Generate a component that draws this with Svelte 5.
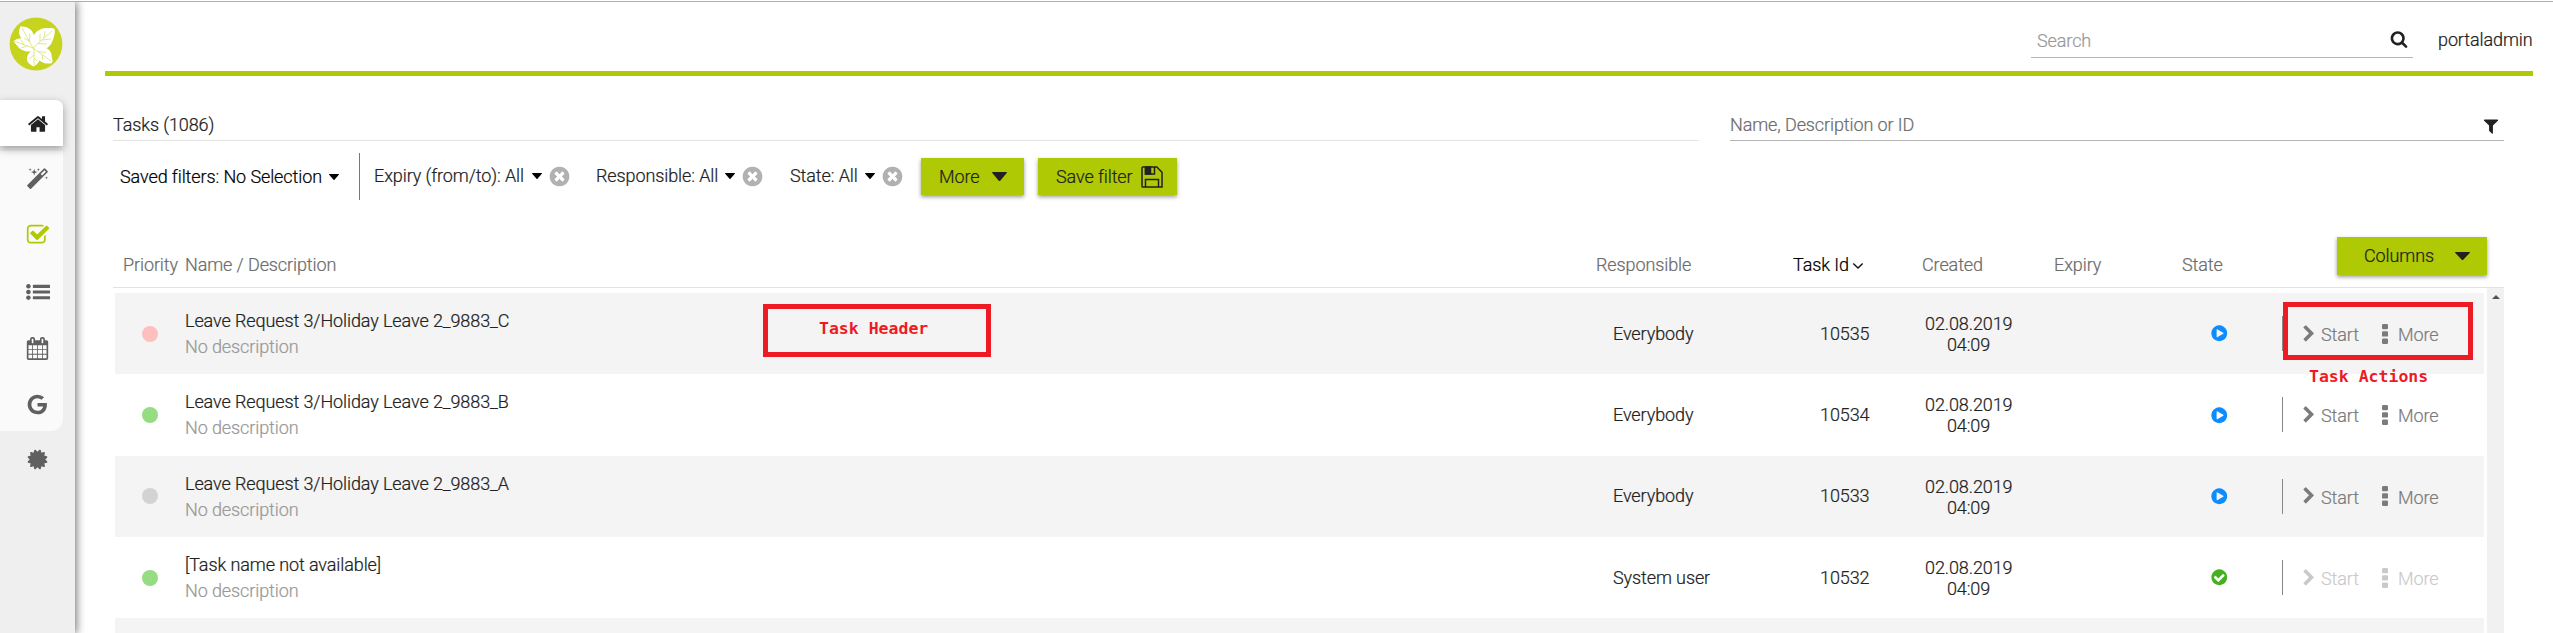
<script>
  const icons = {
    home: 'M1472 992v480q0 26-19 45t-45 19h-384v-384h-256v384h-384q-26 0-45-19t-19-45v-480q0-1 .5-3t.5-3l575-474 575 474q1 2 1 6zm223-69l-62 74q-8 9-21 11h-3q-13 0-21-7l-692-577-692 577q-12 8-24 7-13-2-21-11l-62-74q-8-10-7-23.5t11-21.5l719-599q32-26 76-26t76 26l244 204v-195q0-14 9-23t23-9h192q14 0 23 9t9 23v408l219 182q10 8 11 21.5t-7 23.5z',
    magic: 'M1254 581l293-293-107-107-293 293zm447-293q0 27-18 45l-1286 1286q-18 18-45 18t-45-18l-198-198q-18-18-18-45t18-45l1286-1286q18-18 45-18t45 18l198 198q18 18 18 45zm-1351-190l98 30-98 30-30 98-30-98-98-30 98-30 30-98zm350 162l196 60-196 60-60 196-60-196-196-60 196-60 60-196zm930 478l98 30-98 30-30 98-30-98-98-30 98-30 30-98zm-640-640l98 30-98 30-30 98-30-98-98-30 98-30 30-98z',
    check: 'M1472 930v318q0 119-84.5 203.5t-203.5 84.5h-832q-119 0-203.5-84.5t-84.5-203.5v-832q0-119 84.5-203.5t203.5-84.5h832q63 0 117 25 15 7 18 23 3 17-9 29l-49 49q-10 10-23 10-3 0-9-2-23-6-45-6h-832q-66 0-113 47t-47 113v832q0 66 47 113t113 47h832q66 0 113-47t47-113v-254q0-13 9-22l64-64q10-10 23-10 6 0 12 3 20 8 20 29zm231-489l-814 814q-24 24-57 24t-57-24l-430-430q-24-24-24-57t24-57l110-110q24-24 57-24t57 24l263 263 647-647q24-24 57-24t57 24l110 110q24 24 24 57t-24 57z',
    list: 'M180 300a170 170 0 1 0 .1 0zM180 726a170 170 0 1 0 .1 0zM180 1152a170 170 0 1 0 .1 0zM560 360h1200q50 0 50 50v130q0 50-50 50h-1200q-50 0-50-50v-130q0-50 50-50zM560 786h1200q50 0 50 50v130q0 50-50 50h-1200q-50 0-50-50v-130q0-50 50-50zM560 1212h1200q50 0 50 50v130q0 50-50 50h-1200q-50 0-50-50v-130q0-50 50-50z',
    calendar: 'M192 1664h288v-288h-288v288zm352 0h320v-288h-320v288zm-352-352h288v-320h-288v320zm352 0h320v-320h-320v320zm-352-384h288v-288h-288v288zm736 736h320v-288h-320v288zm-384-736h320v-288h-320v288zm768 736h288v-288h-288v288zm-384-352h320v-320h-320v320zm-352-864v-288q0-13-9.5-22.5t-22.5-9.5h-64q-13 0-22.5 9.5t-9.5 22.5v288q0 13 9.5 22.5t22.5 9.5h64q13 0 22.5-9.5t9.5-22.5zm736 864h288v-320h-288v320zm-384-384h320v-288h-320v288zm384 0h288v-288h-288v288zm32-480v-288q0-13-9.5-22.5t-22.5-9.5h-64q-13 0-22.5 9.5t-9.5 22.5v288q0 13 9.5 22.5t22.5 9.5h64q13 0 22.5-9.5t9.5-22.5zm384-64v1280q0 52-38 90t-90 38h-1408q-52 0-90-38t-38-90v-1280q0-52 38-90t90-38h128v-96q0-66 47-113t113-47h64q66 0 113 47t47 113v96h384v-96q0-66 47-113t113-47h64q66 0 113 47t47 113v96h128q52 0 90 38t38 90z',
    google: 'M896 786h725q12 67 12 128 0 217-91 387.5t-259.5 266.5-386.5 96q-157 0-299-60.5t-245-163.5-163.5-245-60.5-299 60.5-299 163.5-245 245-163.5 299-60.5q300 0 515 201l-209 201q-123-119-306-119-129 0-238.5 65t-173.5 176.5-64 243.5 64 243.5 173.5 176.5 238.5 65q87 0 160-24t120-60 82-82 51.5-87 22.5-78h-436v-264z',
    certificate: 'M1504 896l138 135q30 28 20 70-12 41-52 51l-188 48 53 186q12 41-19 70-29 31-70 19l-186-53-48 188q-10 40-51 52-12 2-19 2-31 0-51-22l-135-138-135 138q-28 30-70 20-41-11-51-52l-48-188-186 53q-41 12-70-19-31-29-19-70l53-186-188-48q-40-10-52-51-10-42 20-70l138-135-138-135q-30-28-20-70 12-41 52-51l188-48-53-186q-12-41 19-70 29-31 70-19l186 53 48-188q10-41 51-51 41-12 70 19l135 139 135-139q29-30 70-19 41 10 51 51l48 188 186-53q41-12 70 19 31 29 19 70l-53 186 188 48q40 10 52 51 10 42-20 70z',
    search: 'M1216 832q0-185-131.5-316.5t-316.5-131.5-316.5 131.5-131.5 316.5 131.5 316.5 316.5 131.5 316.5-131.5 131.5-316.5zm512 832q0 52-38 90t-90 38q-54 0-90-38l-343-342q-179 124-399 124-143 0-273.5-55.5t-225-150-150-225-55.5-273.5 55.5-273.5 150-225 225-150 273.5-55.5 273.5 55.5 225 150 150 225 55.5 273.5q0 220-124 399l343 343q37 37 37 90z',
    filter: 'M1595 295q17 41-14 70l-493 493v742q0 42-39 59-13 5-25 5-27 0-45-19l-256-256q-19-19-19-45v-486l-493-493q-31-29-14-70 17-39 59-39h1280q42 0 59 39z',
    clear: 'M1277 1122q0-26-19-45l-181-181 181-181q19-19 19-45 0-27-19-46l-90-90q-19-19-46-19-26 0-45 19l-181 181-181-181q-19-19-45-19-27 0-46 19l-90 90q-19 19-19 46 0 26 19 45l181 181-181 181q-19 19-19 45 0 27 19 46l90 90q19 19 46 19 26 0 45-19l181-181 181 181q19 19 45 19 27 0 46-19l90-90q19-19 19-46zm387-226q0 209-103 385.5t-279.5 279.5-385.5 103-385.5-103-279.5-279.5-103-385.5 103-385.5 279.5-279.5 385.5-103 385.5 103 279.5 279.5 103 385.5z',
    done: 'M1412 734q0-28-18-46l-91-90q-19-19-45-19t-45 19l-408 407-226-226q-19-19-45-19t-45 19l-91 90q-18 18-18 46 0 27 18 45l362 362q19 19 45 19 27 0 46-19l543-543q18-18 18-45zm252 162q0 209-103 385.5t-279.5 279.5-385.5 103-385.5-103-279.5-279.5-103-385.5 103-385.5 279.5-279.5 385.5-103 385.5 103 279.5 279.5 103 385.5z',
    play: 'M896 128q209 0 385.5 103t279.5 279.5 103 385.5-103 385.5-279.5 279.5-385.5 103-385.5-103-279.5-279.5-103-385.5 103-385.5 279.5-279.5 385.5-103zm384 823q32-18 32-55t-32-55l-544-320q-31-19-64-1-32 19-32 56v640q0 37 32 56 16 8 32 8 17 0 32-9z',
    chevron: 'M1363 877l-742 742q-19 19-45 19t-45-19l-166-166q-19-19-19-45t19-45l531-531-531-531q-19-19-19-45t19-45l166-166q19-19 45-19t45 19l742 742q19 19 19 45t-19 45z'
  };
  const menu = [
    ['magic', 23], ['check', 24], ['list', 24], ['calendar', 23], ['google', 23]
  ];
  const filters = [
    { label: 'Expiry (from/to): All', w: 151, gap: 24 },
    { label: 'Responsible: All', w: 122, gap: 25 },
    { label: 'State: All', w: 68, gap: 16 }
  ];
  const rows = [
    { name: 'Leave Request 3/Holiday Leave 2_9883_C', color: '#ffbfbf', who: 'Everybody', id: '10535', state: 'play' },
    { name: 'Leave Request 3/Holiday Leave 2_9883_B', color: '#96dc82', who: 'Everybody', id: '10534', state: 'play' },
    { name: 'Leave Request 3/Holiday Leave 2_9883_A', color: '#d3d3d3', who: 'Everybody', id: '10533', state: 'play' },
    { name: '[Task name not available]', color: '#96dc82', who: 'System user', id: '10532', state: 'done' }
  ];
</script>

{#snippet icon(name, size)}
  <svg class="icon" width={size} height={size} viewBox="0 0 1792 1792"><path d={icons[name]} fill="currentColor" /></svg>
{/snippet}

{#snippet caret(w, h)}
  <svg class="icon" width={w} height={h} viewBox="0 0 10 6" preserveAspectRatio="none"><path d="M.5 0h9q.8.1.3.7L5.5 5.8q-.5.4-1 0L.2.7Q-.3.1.5 0z" fill="currentColor" /></svg>
{/snippet}

<div class="page">
  <aside>
    <svg class="logo" width="54" height="54" viewBox="0 0 54 54">
      <circle cx="27" cy="27" r="26.4" fill="#c6d420" />
      <path d="M24 23.500C20 23 16 20 12.500 16 10.500 12 10.500 10 11.500 9.500 14 9 19 10 22 13c1.800 2 2.500 4 2.800 5.500C26 14.500 33 11 37 11c4 0 7-.2 8.500.8 1 3-.5 8-1.500 11-1.500 4.500-4 7-6.500 8.500 3 1.500 5 4 5 7 .5 4 2 6 .5 7.700-4 1.300-9 .5-12.500-2.500-1.500 3-3 4.500-6 6-3-1.500-6-3.500-6.500-6.500-.3-4 1-6.500 4-8.500-6 .5-11-1.500-14-6-1.500-2-3-3-3.500-4.500 2-1.500 5-2.500 8-2.700C10 18 9 14 11 11z" fill="#fff" />
      <g fill="none" stroke="#d3de5b" stroke-width=".7">
        <path d="M24 31L13 11M24 31L43 14M24 31L5 24M24 31l18 13M25 31l0 17M20 24l-5-3M20.500 24.500l.5-8M31 25v-8M35 21l1-7M29 26.500l9 .5M33 23l9-1M15 28l-3-5M18 29l-6 2M29 34.500l8 1M33 38l1 5M25 38l-5 4M25 41l3 3" />
      </g>
    </svg>
    <div class="active">{@render icon('home', 22)}</div>
    <nav>
      {#each menu as [name, size]}
        <span class:green={name === 'check'}>{@render icon(name, size)}</span>
      {/each}
    </nav>
    <div class="extra">{@render icon('certificate', 23)}</div>
  </aside>

  <main>
    <header>
      <div class="search"><span>Search</span>{@render icon('search', 18)}</div>
      <span class="user">portaladmin</span>
    </header>

    <section>
      <div class="titlebar">
        <div class="title">Tasks (1086)</div>
        <div class="query"><span>Name, Description or ID</span>{@render icon('filter', 18)}</div>
      </div>

      <div class="filters">
        <div class="saved"><span>Saved filters: No Selection</span>{@render caret(10, 6)}</div>
        {#each filters as f}
          <div class="filter" style="margin-right:{f.gap}px">
            <span style="width:{f.w}px">{f.label}</span>
            <i>{@render caret(10, 6)}</i>
            <b>{@render icon('clear', 23)}</b>
          </div>
        {/each}
        <button class="more"><span>More</span>{@render caret(15, 9)}</button>
        <button class="save"><span>Save filter</span>
          <svg width="22" height="22" viewBox="0 0 22 22" fill="none" stroke="#222" stroke-width="1.5"><path d="M1.8 1h14l5.2 5.200V21H1.800Q1 21 1 20.200V1.800Q1 1 1.800 1z" /><path d="M4.500 1v7h9V1M4.500 21v-7.500h13V21" /><path d="M4.500 1h5v7h-5z" fill="#222" /></svg>
        </button>
      </div>

      <div class="thead">
        <span class="c1">Priority</span>
        <span class="c2">Name / Description</span>
        <span class="c3">Responsible</span>
        <span class="c4">Task Id<svg width="12" height="8" viewBox="0 0 12 8"><path d="M1.300 1.500L6 6l4.700-4.500" fill="none" stroke="#111" stroke-width="1.400" /></svg></span>
        <span class="c5">Created</span>
        <span class="c6">Expiry</span>
        <span class="c7">State</span>
        <button class="columns"><span>Columns</span>{@render caret(15, 8)}</button>
      </div>

      <div class="scroller">
        <div class="rows">
          {#each rows as r}
            <div class="row">
              <div class="prio"><i style="background:{r.color}"></i></div>
              <div class="name"><div>{r.name}</div><div class="desc">No description</div></div>
              <div class="who">{r.who}</div>
              <div class="id">{r.id}</div>
              <div class="date">02.08.2019<br />04:09</div>
              <div class="state" class:ok={r.state === 'done'}>{@render icon(r.state, 18.500)}</div>
              <div class="actions" class:off={r.state === 'done'}>
                {@render icon('chevron', 18)}
                <span class="start">Start</span>
                <svg class="dots" width="6" height="20" viewBox="0 0 6 20" fill="currentColor"><rect width="6" height="5.300" rx="1.200" /><rect y="7.300" width="6" height="5.300" rx="1.200" /><rect y="14.600" width="6" height="5.300" rx="1.200" /></svg>
                <span>More</span>
              </div>
            </div>
          {/each}
          <div class="row"></div>
        </div>
        <div class="scrollbar"><svg width="8" height="4" viewBox="0 0 8 4"><path d="M4 0l4 4H0z" fill="#505050" /></svg></div>
      </div>
    </section>
  </main>

  <div class="note box-header">Task Header</div>
  <div class="note box-actions"></div>
  <div class="note label-actions">Task Actions</div>
</div>

<style>
  :global(body) { background: #fff; overflow: hidden; }
  * { box-sizing: border-box; }
  .page { position: relative; width: 2553px; height: 633px; overflow: hidden; display: flex; border-top: 1px solid #fff; font: 300 18px/26px Roboto, sans-serif; letter-spacing: -.1px; -webkit-text-stroke: .22px currentColor; color: #222; white-space: nowrap; background: #fff; }
  .page::before { content: ''; position: absolute; left: 0; right: 0; top: 0; height: 1px; background: #aaafaa; }
  svg { display: block; flex: none; }
  i { display: block; font-style: normal; }
  b { display: block; font-weight: 300; }
  aside { width: 75px; height: 632px; flex: none; background: #efefef; box-shadow: 1px 0 9px rgba(0, 0, 0, .6); display: flex; flex-direction: column; margin-top: 1px; color: #606060; }
  .logo { margin: 15px 0 0 9px; }
  .active { margin-top: 29px; width: 63px; height: 46px; border-radius: 0 7px 0 0; background: #fff; box-shadow: 0 3px 8px rgba(0, 0, 0, .35); color: #222; padding: 13px 0 0 27px; position: relative; }
  nav { width: 63px; height: 280px; margin-top: 5px; background: #fafafa; border-radius: 0 0 12px 0; display: grid; grid-template-rows: repeat(5, 56.300px); padding-left: 26px; align-items: center; }
  .green { color: #afca05; }
  .extra { padding: 17px 0 0 26px; }
  main { flex: 1; padding: 0 20px 0 30px; }
  header { height: 75px; border-bottom: 5px solid #afca05; display: flex; justify-content: flex-end; padding-top: 21px; }
  .search { width: 382px; height: 36px; border-bottom: 1px solid #b5b5b5; display: flex; justify-content: space-between; padding: 6px 5px 0 6px; color: #999; margin-right: 25px; }
  .search .icon { color: #222; margin-top: 2px; }
  .user { width: 94px; padding-top: 5px; margin-right: 1px; }
  section { padding: 0 29px 0 8px; }
  .titlebar { height: 65px; display: flex; gap: 31px; align-items: flex-end; }
  .title { width: 1586px; height: 28px; border-bottom: 1px solid #e2e2e2; line-height: 24px; }
  .query { flex: 1; height: 28px; border-bottom: 1px solid #b5b5b5; line-height: 24px; display: flex; justify-content: space-between; padding-right: 4px; color: #6c6c6c; }
  .query .icon { color: #222; margin-top: 4px; }
  .filters { height: 96px; display: flex; padding: 12px 0 0 7px; align-items: flex-start; }
  .saved { width: 240px; height: 47px; border-right: 1px solid #777; display: flex; align-items: center; color: #000; margin-right: 14px; }
  .saved span { width: 209px; }
  .filter { display: flex; align-items: center; height: 46px; }
  .filter span { line-height: 46px; height: 46px; }
  .filter i { margin: 0 6px 0 7px; color: #000; }
  .filter b { width: 24px; margin-top: 1px; color: #b1b1b1; }
  button { border: 0; background: #afca05; color: #222; font: inherit; letter-spacing: inherit; text-align: left; padding: 0; display: flex; align-items: center; box-shadow: 0 2px 4px rgba(0, 0, 0, .4); }
  .more { width: 103px; height: 37px; margin: 5px 14px 0 0; padding-left: 18px; }
  .more span { width: 53px; }
  .save { width: 139px; height: 37px; margin-top: 5px; padding-left: 18px; }
  .save span { width: 85px; }
  .thead { height: 51px; border-bottom: 1px solid #e2e2e2; display: flex; padding-left: 10px; color: #6c6c6c; line-height: 56px; }
  .c1 { width: 62px; }
  .c2 { width: 1411px; }
  .c3 { width: 197px; }
  .c4 { width: 129px; color: #000; display: flex; }
  .c4 svg { margin: 25px 0 0 3px; }
  .c5 { width: 132px; }
  .c6 { width: 128px; }
  .c7 { width: 155px; }
  .columns { width: 150px; height: 38px; padding-left: 27px; line-height: 38px; }
  .columns span { width: 91px; }
  .scroller { display: flex; justify-content: space-between; height: 345px; padding-left: 2px; }
  .rows { width: 2369px; padding-top: 5px; }
  .row { height: 81.330px; display: flex; align-items: center; }
  .row:nth-child(odd) { background: #f4f4f4; }
  .prio { width: 70px; padding-left: 27px; }
  .prio i { width: 16px; height: 16px; border-radius: 50%; }
  .name { width: 1428px; padding-top: 1px; }
  .desc { color: #999; }
  .who { width: 207px; }
  .id { width: 105px; }
  .date { width: 87px; line-height: 21px; text-align: center; margin-top: 1px; }
  .state { width: 270px; padding-left: 198px; color: #0d8cff; }
  .ok { color: #46b022; }
  .actions { height: 35px; border-left: 1px solid #888; display: flex; align-items: center; padding-left: 17px; color: #7b7b7b; }
  .actions span { padding-top: 3px; }
  .start { width: 61px; margin-left: 3px; }
  .dots { margin: 0 10px 0 0; }
  .off > * { opacity: .4; }
  .scrollbar { width: 17px; background: #f1f1f1; padding: 7px 0 0 5px; }
  .note { position: absolute; color: #ed1c24; letter-spacing: 0; -webkit-text-stroke: 0; font: bold 16.500px/20px "DejaVu Sans Mono", monospace; }
  .box-header { left: 763px; top: 303px; width: 228px; height: 53px; border: 5px solid #ed1c24; padding: 10px 0 0 51px; }
  .box-actions { left: 2283px; top: 301px; width: 190px; height: 58px; border: 5px solid #ed1c24; }
  .label-actions { left: 2309px; top: 366px; }
</style>
